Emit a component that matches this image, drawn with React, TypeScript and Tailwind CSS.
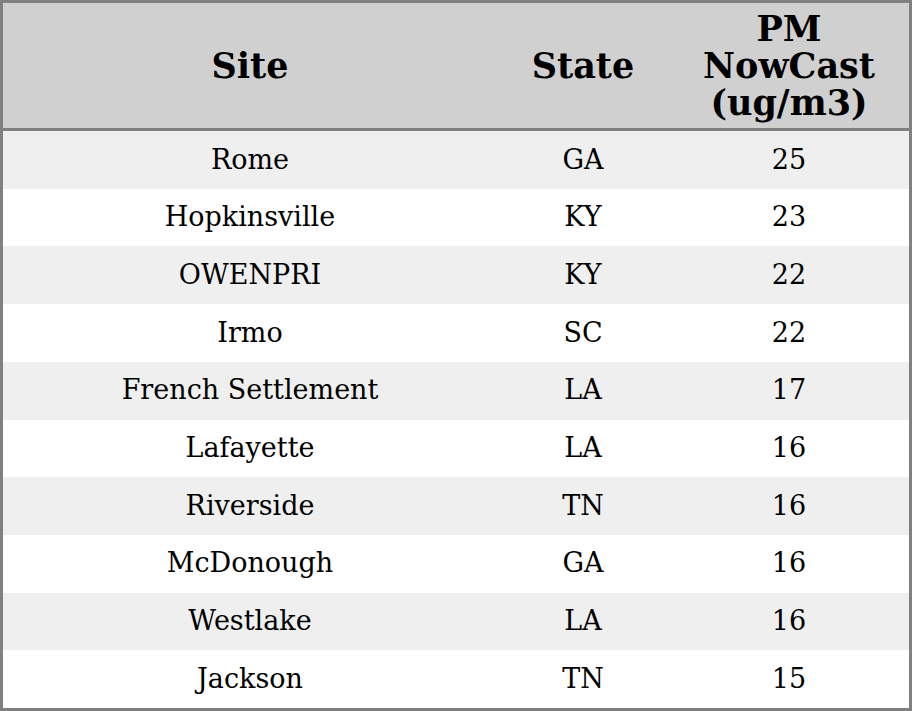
const rows = [
  { site: "Rome", state: "GA", pm: 25 },
  { site: "Hopkinsville", state: "KY", pm: 23 },
  { site: "OWENPRI", state: "KY", pm: 22 },
  { site: "Irmo", state: "SC", pm: 22 },
  { site: "French Settlement", state: "LA", pm: 17 },
  { site: "Lafayette", state: "LA", pm: 16 },
  { site: "Riverside", state: "TN", pm: 16 },
  { site: "McDonough", state: "GA", pm: 16 },
  { site: "Westlake", state: "LA", pm: 16 },
  { site: "Jackson", state: "TN", pm: 15 },
];

export default function App() {
  return (
    <div className="h-[711px] w-[912px] border-[3px] border-[#808080] bg-white flex flex-col font-['DejaVu_Serif',serif] text-black">
      {/* Header */}
      <div className="h-[128px] shrink-0 border-b-[3px] border-[#808080] bg-[#d0d0d0] grid grid-cols-[494px_172px_240px] items-center text-center text-[35px] font-bold leading-[37px]">
        <div>Site</div>
        <div>State</div>
        <div>
          PM
          <br />
          NowCast
          <br />
          (ug/m3)
        </div>
      </div>

      {/* Rows */}
      <div className="flex-1 grid grid-rows-10">
        {rows.map((row, i) => (
          <div
            key={i}
            className={`grid grid-cols-[494px_172px_240px] items-center text-center text-[27px] ${
              i % 2 === 0 ? "bg-[#efefef]" : "bg-white"
            }`}
          >
            <div>{row.site}</div>
            <div>{row.state}</div>
            <div>{row.pm}</div>
          </div>
        ))}
      </div>
    </div>
  );
}
